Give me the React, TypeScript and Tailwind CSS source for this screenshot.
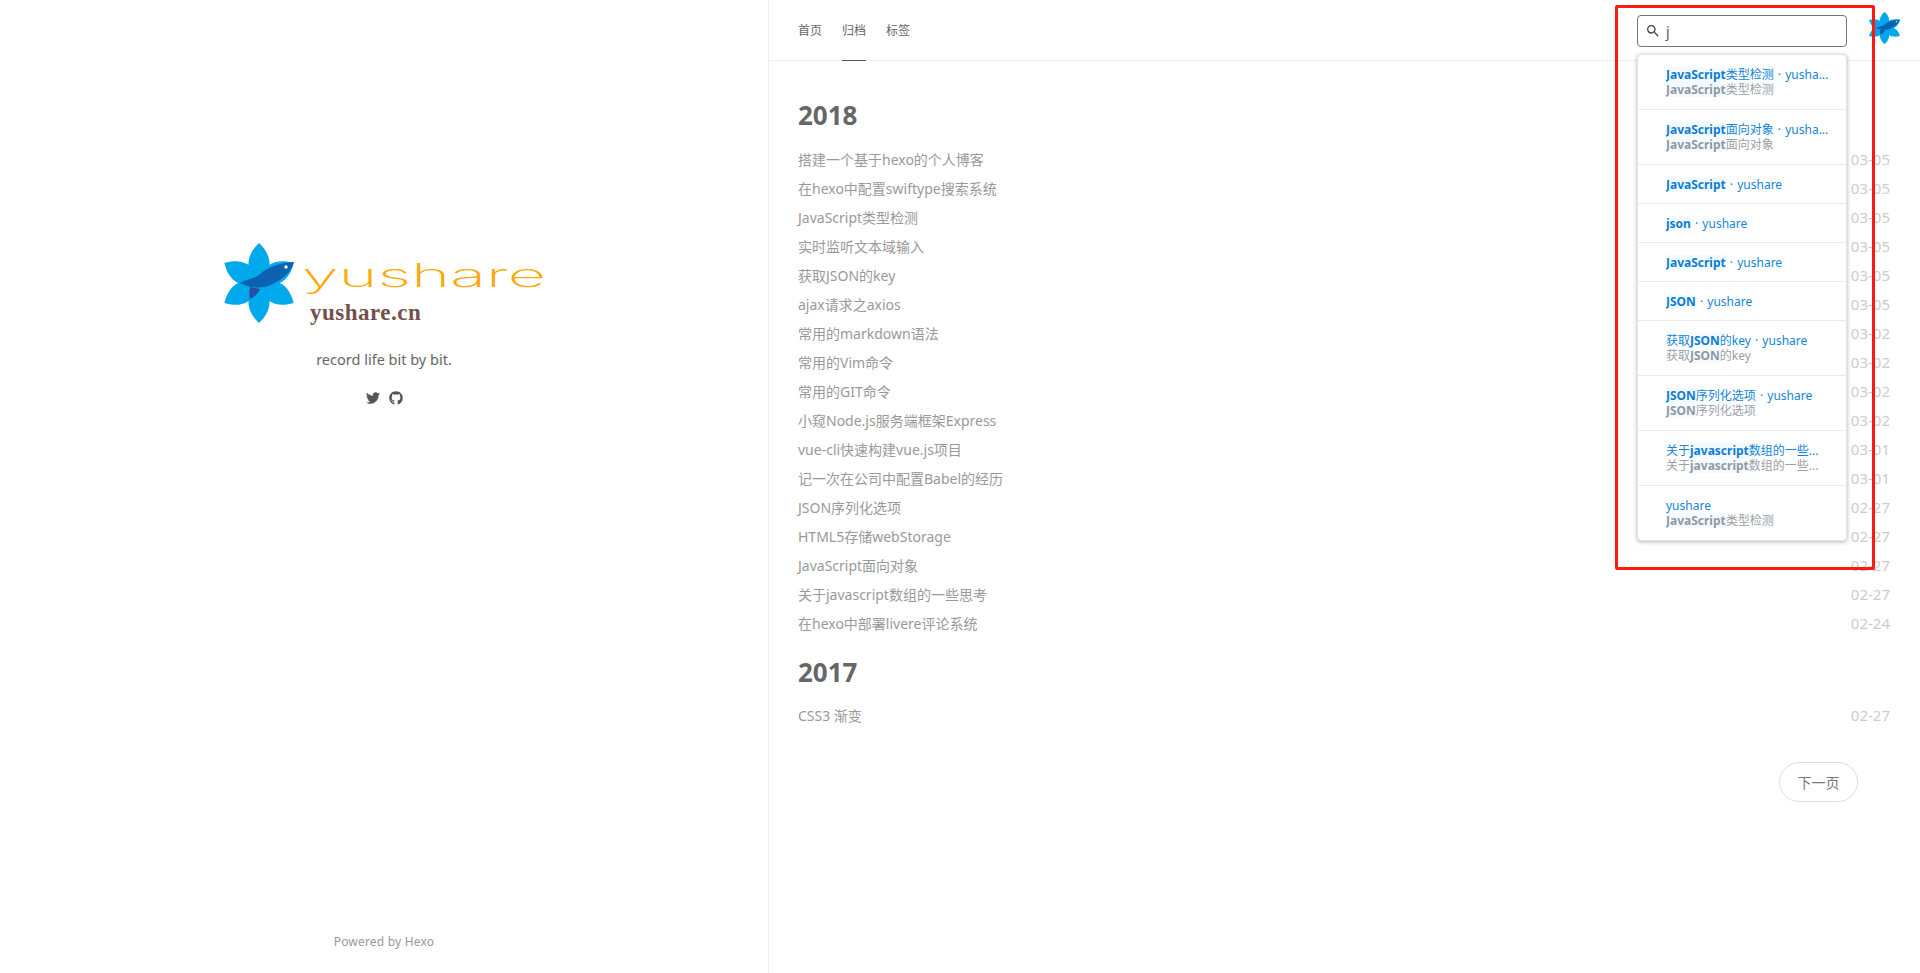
import { FaGithub, FaTwitter } from 'react-icons/fa'

const font = { fontFamily: '"Noto Sans", "Noto Sans CJK SC", sans-serif' }

type Post = { title: string; date: string }

const posts2018: Post[] = [
  { title: '搭建一个基于hexo的个人博客', date: '03-05' },
  { title: '在hexo中配置swiftype搜索系统', date: '03-05' },
  { title: 'JavaScript类型检测', date: '03-05' },
  { title: '实时监听文本域输入', date: '03-05' },
  { title: '获取JSON的key', date: '03-05' },
  { title: 'ajax请求之axios', date: '03-05' },
  { title: '常用的markdown语法', date: '03-02' },
  { title: '常用的Vim命令', date: '03-02' },
  { title: '常用的GIT命令', date: '03-02' },
  { title: '小窥Node.js服务端框架Express', date: '03-02' },
  { title: 'vue-cli快速构建vue.js项目', date: '03-01' },
  { title: '记一次在公司中配置Babel的经历', date: '03-01' },
  { title: 'JSON序列化选项', date: '02-27' },
  { title: 'HTML5存储webStorage', date: '02-27' },
  { title: 'JavaScript面向对象', date: '02-27' },
  { title: '关于javascript数组的一些思考', date: '02-27' },
  { title: '在hexo中部署livere评论系统', date: '02-24' },
]

// pre / hit / post for the highlighted part of a result line
type Line = [string, string, string]
type Result = { title: Line; sub?: Line }

const results: Result[] = [
  { title: ['', 'JavaScript', '类型检测 · yusha...'], sub: ['', 'JavaScript', '类型检测'] },
  { title: ['', 'JavaScript', '面向对象 · yusha...'], sub: ['', 'JavaScript', '面向对象'] },
  { title: ['', 'JavaScript', ' · yushare'] },
  { title: ['', 'json', ' · yushare'] },
  { title: ['', 'JavaScript', ' · yushare'] },
  { title: ['', 'JSON', ' · yushare'] },
  { title: ['获取', 'JSON', '的key · yushare'], sub: ['获取', 'JSON', '的key'] },
  { title: ['', 'JSON', '序列化选项 · yushare'], sub: ['', 'JSON', '序列化选项'] },
  { title: ['关于', 'javascript', '数组的一些...'], sub: ['关于', 'javascript', '数组的一些...'] },
  { title: ['yushare', '', ''], sub: ['', 'JavaScript', '类型检测'] },
]

function Flower({ className }: { className?: string }) {
  return (
    <svg viewBox="0 0 70 80" preserveAspectRatio="none" className={className}>
      {[0, 60, 120, 180, 240, 300].map(a => (
        <path
          key={a}
          d="M35 40C20 28 22 12 35 0C48 12 50 28 35 40Z"
          fill="#00a8ec"
          transform={`rotate(${a} 35 40)`}
        />
      ))}
      <path d="M36 46C34 50 32 53 26 56C25 52 25 48 26 44Z" fill="#2a4ba6" />
      <path d="M16 40C22 36 30 36 35 32C43 24 55 20 70 19C68 28 58 38 44 43C34 46 24 44 16 40Z" fill="#0a62b0" />
      <circle cx="62" cy="24" r="1.7" fill="#fff" />
    </svg>
  )
}

function Logo() {
  return (
    <div className="flex items-start">
      <Flower className="w-[70px] h-[80px] shrink-0" />
      <div className="ml-[8px] w-[242px]">
        <svg viewBox="0 0 244 36" className="w-[244px] h-[36px] mt-[19px] block overflow-visible">
          <text
            x="0"
            y="25"
            textLength="244"
            lengthAdjust="spacingAndGlyphs"
            fontSize="33"
            fontWeight="200"
            fill="#ffa800"
            style={{ fontFamily: 'Inter, sans-serif' }}
          >
            yushare
          </text>
        </svg>
        <div
          className="ml-[8px] mt-[2px] text-[23px] leading-[26px] font-bold text-[#75504a] tracking-[0.5px]"
          style={{ fontFamily: '"Liberation Serif", serif' }}
        >
          yushare.cn
        </div>
      </div>
    </div>
  )
}

function Hit({ line, sub }: { line: Line; sub?: boolean }) {
  const [pre, hit, post] = line
  return (
    <div className={`truncate h-[15px] leading-[15px] [word-spacing:1px] ${sub ? 'text-[#9aa0a8]' : 'text-[#1284d8]'}`}>
      {pre}
      {hit && (
        <span className={`font-bold bg-[#f4fbff] ${sub ? 'border-b border-[#e3e8ee] text-[#8f98a3]' : 'text-[#0b7dd6]'}`}>
          {hit}
        </span>
      )}
      <span className="whitespace-pre">{post}</span>
    </div>
  )
}

function SearchBox() {
  return (
    <div className="relative w-[210px] h-[32px] mt-[15px]">
      <div className="h-full border border-[#757575] rounded-[4px] bg-white flex items-center pl-[7px]">
        <svg viewBox="0 0 24 24" className="w-[16px] h-[16px] fill-[#444]">
          <path d="M15.5 14h-.79l-.28-.27A6.471 6.471 0 0 0 16 9.5 6.5 6.5 0 1 0 9.5 16c1.61 0 3.09-.59 4.23-1.57l.27.28v.79l5 4.99L20.49 19l-4.99-5zm-6 0C7.01 14 5 11.99 5 9.5S7.01 5 9.5 5 14 7.01 14 9.5 11.99 14 9.5 14z" />
        </svg>
        <span className="ml-[5px] text-[14px] text-[#555]">j</span>
      </div>
      <div className="absolute left-0 top-[39px] w-[210px] bg-white border border-[#e3e3e3] rounded-[4px] shadow-[0_1px_4px_rgba(0,0,0,0.3)] text-[12px] z-10">
        {results.map((r, i) => (
          <div
            key={i}
            className={`pl-[28px] pr-[14px] flex flex-col justify-center border-[#e8ebf0] ${i === 0 ? 'h-[54px]' : r.sub ? 'h-[55px] border-t' : 'h-[39px] border-t'}`}
          >
            <Hit line={r.title} />
            {r.sub && <Hit line={r.sub} sub />}
          </div>
        ))}
      </div>
    </div>
  )
}

function Row({ post }: { post: Post }) {
  return (
    <div className="flex justify-between items-center h-[29px] text-[14px]">
      <span className="text-[#999]">{post.title}</span>
      <span className="text-[#ccc] text-[15px]">{post.date}</span>
    </div>
  )
}

export default function App() {
  return (
    <div className="relative flex h-[973px] bg-white overflow-hidden" style={font}>
      <aside className="w-[769px] shrink-0 border-r border-[#eee] flex flex-col items-center pt-[243px] pb-[22px]">
        <Logo />
        <p className="mt-[23px] text-[14.5px] leading-[20px] text-[#666]">record life bit by bit.</p>
        <div className="mt-[22px] flex items-center gap-[9px] text-[#555] text-[14px]">
          <FaTwitter />
          <FaGithub />
        </div>
        <p className="mt-auto text-[12px] text-[#999] tracking-[0.2px]">Powered by Hexo</p>
      </aside>

      <main className="flex-1 min-w-0">
        <header className="relative h-[61px] border-b border-[#eee] flex items-start pl-[29px] pr-[20px]">
          <nav className="flex gap-[20px] text-[12px] text-[#666]">
            <a className="h-[61px] leading-[61px]">首页</a>
            <a className="h-[61px] leading-[61px] border-b border-[#555]">归档</a>
            <a className="h-[61px] leading-[61px]">标签</a>
          </nav>
          <div className="ml-auto flex items-start gap-[22px]">
            <SearchBox />
            <Flower className="w-[31px] h-[32px] mt-[12px]" />
          </div>
        </header>

        <section className="pl-[29px] pr-[30px]">
          <h2 className="mt-[34px] mb-[10px] text-[26px] leading-[40px] font-bold text-[#666]">2018</h2>
          {posts2018.map((p, i) => (
            <Row key={i} post={p} />
          ))}
          <h2 className="mt-[14px] mb-[9px] text-[26px] leading-[40px] font-bold text-[#666]">2017</h2>
          <Row post={{ title: 'CSS3 渐变', date: '02-27' }} />
          <div className="flex justify-end pr-[32px] mt-[32px]">
            <button className="w-[79px] h-[40px] rounded-full border border-[#ddd] text-[14px] text-[#777]">下一页</button>
          </div>
        </section>
      </main>

      {/* annotation frame drawn on the screenshot */}
      <div className="absolute left-[1615px] top-[5px] w-[260px] h-[565px] border-[3px] border-[#ff1a10] rounded-[2px] pointer-events-none z-20" />
    </div>
  )
}
